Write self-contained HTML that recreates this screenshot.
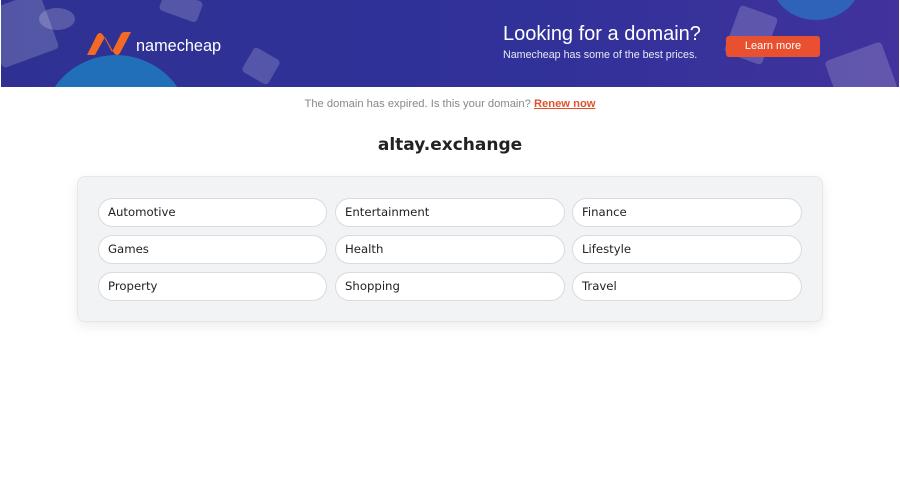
<!DOCTYPE html>
<html><head><style>
*{margin:0;padding:0;box-sizing:border-box}
body{width:900px;height:500px;background:#fff;font-family:"DejaVu Sans",sans-serif;position:relative;overflow:hidden}
.ban{position:absolute;left:1px;top:0;width:898px;height:87px;background:linear-gradient(90deg,#2f3192 0%,#31319a 60%,#41329c 100%);overflow:hidden}
.c{position:absolute;border-radius:50%}
.sq{position:absolute;background:rgba(255,255,255,.18);border-radius:4px}
.pill{position:absolute;height:29px;border:1px solid #d9dbe0;background:#fff;border-radius:15px;font-size:11.7px;color:#222;padding-left:9px;line-height:27px}
</style></head><body>
<div class="ban">
 <div class="c" style="left:40px;top:55px;width:150px;height:150px;background:#1f79c0;opacity:.85"></div>
 <div class="c" style="left:770px;top:-60px;width:90px;height:80px;background:#2a6fc0;opacity:.8"></div>
 <div class="sq" style="left:-10px;top:0;width:60px;height:60px;transform:rotate(-20deg)"></div>
 <div class="c" style="left:38px;top:8px;width:36px;height:22px;background:rgba(255,255,255,.2)"></div>
 <div class="sq" style="left:160px;top:-5px;width:40px;height:22px;transform:rotate(20deg)"></div>
 <div class="sq" style="left:245px;top:52px;width:30px;height:28px;transform:rotate(30deg)"></div>
 <div class="sq" style="left:730px;top:10px;width:40px;height:50px;transform:rotate(20deg)"></div>
 <div class="sq" style="left:830px;top:50px;width:60px;height:50px;transform:rotate(-20deg)"></div>
 <svg style="position:absolute;left:85px;top:31px" width="46" height="26" viewBox="0 0 46 26"><path d="M1 24 L11 4 Q14 0 17 4 L26 21 L35 3 Q36 1 39 1 L45 1 L34 22 Q31 26 28 22 L19 6 L9 24 Z" fill="#f46a25"/></svg>
 <div style="position:absolute;left:135px;top:37px;color:#fff;font-family:'Liberation Sans',sans-serif;font-size:16.3px">namecheap</div>
 <div style="position:absolute;left:502px;top:23px;color:#fff;font-family:'Liberation Sans',sans-serif;font-size:20px">Looking for a domain?</div>
 <div style="position:absolute;left:502px;top:49px;color:#e8e8f5;font-family:'Liberation Sans',sans-serif;font-size:10.7px">Namecheap has some of the best prices.</div>
 <div style="position:absolute;left:725px;top:36px;width:94px;height:21px;background:#e8502f;border-radius:3px;color:#fff;font-family:'Liberation Sans',sans-serif;font-size:11px;text-align:center;line-height:21px">Learn more</div>
</div>
<div style="position:absolute;top:98px;width:900px;text-align:center;font-family:'Liberation Sans',sans-serif;font-size:11.2px;color:#888">The domain has expired. Is this your domain? <b style="color:#e0522c;text-decoration:underline">Renew now</b></div>
<div style="position:absolute;top:135px;width:900px;text-align:center;font-size:17px;font-weight:bold;color:#222">altay.exchange</div>
<div style="position:absolute;left:77px;top:176px;width:746px;height:146px;background:#f2f3f5;border:1px solid #e6e7ea;border-radius:8px;box-shadow:0 4px 12px rgba(0,0,0,.08)"></div>
<div class="pill" style="left:98px;top:198px;width:229px">Automotive</div>
<div class="pill" style="left:335px;top:198px;width:230px">Entertainment</div>
<div class="pill" style="left:572px;top:198px;width:230px">Finance</div>
<div class="pill" style="left:98px;top:235px;width:229px">Games</div>
<div class="pill" style="left:335px;top:235px;width:230px">Health</div>
<div class="pill" style="left:572px;top:235px;width:230px">Lifestyle</div>
<div class="pill" style="left:98px;top:272px;width:229px">Property</div>
<div class="pill" style="left:335px;top:272px;width:230px">Shopping</div>
<div class="pill" style="left:572px;top:272px;width:230px">Travel</div>
</body></html>
